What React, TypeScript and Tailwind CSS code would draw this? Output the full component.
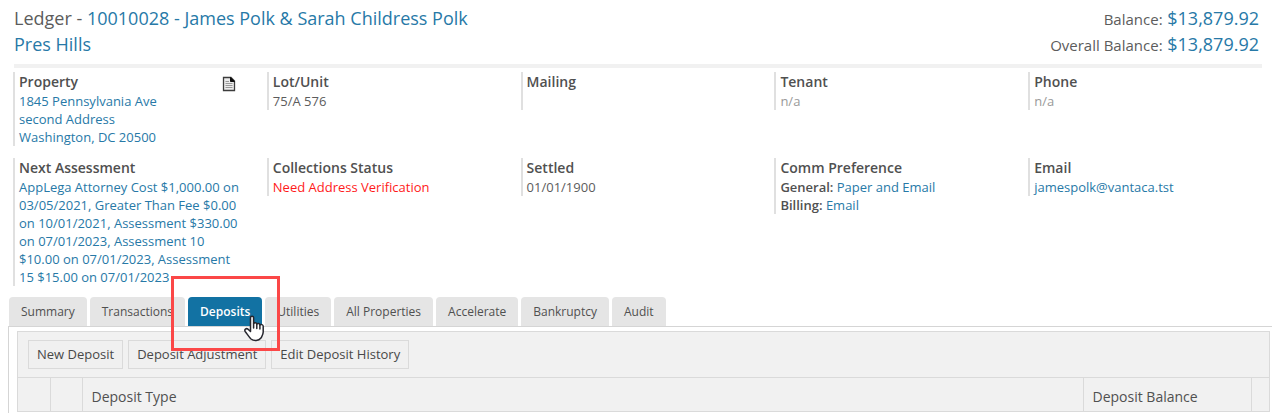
import type { ReactNode } from "react";

const tabs = [
  "Summary",
  "Transactions",
  "Deposits",
  "Utilities",
  "All Properties",
  "Accelerate",
  "Bankruptcy",
  "Audit",
];
const actions = ["New Deposit", "Deposit Adjustment", "Edit Deposit History"];

const NoteIcon = () => (
  <svg viewBox="0 0 14 16" className="h-4 w-[14px]" fill="none">
    <path d="M1.500 1.500h7.500l3.500 3.500v9.500h-11z" fill="#ececec" stroke="#3c3c3c" strokeWidth="1.300" />
    <path d="M8.500 1.500v4h4z" fill="#111" stroke="#111" />
    <path d="M3.500 5.500h3.500M3.500 7.500h7M3.500 9.500h7M3.500 11.500h7" stroke="#999" />
  </svg>
);

const HandCursor = () => (
  <svg
    viewBox="0 0 20 27"
    className="absolute top-[18px] left-[56px] h-[27px] w-5"
    fill="#fff"
    stroke="#26262e"
    strokeWidth="1.500"
    strokeLinejoin="round"
    strokeLinecap="round"
  >
    <path d="M6.500 15V2.600C6.500 .8 9.600 .8 9.600 2.600V8.600C10.200 7.200 12.800 7.400 12.800 9.200C13.600 8 15.900 8.200 15.900 10C17 9 19.200 9.500 19.200 11.300V17C19.200 19.500 18 21 17 23C14.500 26.200 9.800 26.200 7 24C5 22 3.500 19.500 1.200 16.500C0 14.500 2.200 13 3.800 14L6.500 16.500Z" />
    <path d="M9.600 8.600v4.500M12.800 9.200V13.500M15.900 10V14" />
  </svg>
);

const Field = ({
  title,
  icon,
  children,
}: {
  title: string;
  icon?: ReactNode;
  children?: ReactNode;
}) => (
  <section className="relative self-start border-l-2 border-[#e0e0e0] pr-1 pl-1 text-[13px] leading-[18px]">
    <h2 className="text-sm leading-5 font-semibold text-[#505050]">{title}</h2>
    {icon}
    {children}
  </section>
);

const Link = ({ children }: { children: ReactNode }) => (
  <a href="#" className="text-[#2779a7]">
    {children}
  </a>
);

const App = () => (
  <main className="overflow-hidden bg-white font-['Open_Sans',sans-serif] text-[#5c5c5c]">
    <header className="mr-[10px] ml-[14px] flex justify-between border-b-4 border-[#f1f1f1] pt-[5px] pb-[7px] text-lg leading-[26px]">
      <h1>
        Ledger -{" "}
        <Link>
          10010028 - James Polk &amp; Sarah Childress Polk
          <br />
          Pres Hills
        </Link>
      </h1>
      <div className="mr-[3px] text-right">
        <p>
          <span className="text-[15px] leading-none">Balance:</span>{" "}
          <Link>$13,879.92</Link>
        </p>
        <p>
          <span className="text-[15px] leading-none">Overall Balance:</span>{" "}
          <Link>$13,879.92</Link>
        </p>
      </div>
    </header>

    <div className="mt-1 mr-[10px] ml-[13px] grid grid-cols-5 gap-x-5 gap-y-3">
      <Field
        title="Property"
        icon={
          <button aria-label="Notes" className="absolute top-1 right-[11px]">
            <NoteIcon />
          </button>
        }
      >
        <Link>
          1845 Pennsylvania Ave
          <br />
          second Address
          <br />
          Washington, DC 20500
        </Link>
      </Field>
      <Field title="Lot/Unit">75/A 576</Field>
      <Field title="Mailing">
        <br />
      </Field>
      <Field title="Tenant">
        <p className="text-[#999]">n/a</p>
      </Field>
      <Field title="Phone">
        <p className="text-[#999]">n/a</p>
      </Field>
      <Field title="Next Assessment">
        <Link>
          AppLega Attorney Cost $1,000.00 on 03/05/2021, Greater Than Fee $0.00
          on 10/01/2021, Assessment $330.00 on 07/01/2023, Assessment 10 $10.00
          on 07/01/2023, Assessment 15 $15.00 on 07/01/2023
        </Link>
      </Field>
      <Field title="Collections Status">
        <p className="text-[#ff1a1a]">Need Address Verification</p>
      </Field>
      <Field title="Settled">01/01/1900</Field>
      <Field title="Comm Preference">
        <p>
          <b className="font-semibold text-[#505050]">General:</b>{" "}
          <Link>Paper and Email</Link>
        </p>
        <p>
          <b className="font-semibold text-[#505050]">Billing:</b>{" "}
          <Link>Email</Link>
        </p>
      </Field>
      <Field title="Email">
        <Link>jamespolk@vantaca.tst</Link>
      </Field>
    </div>

    <nav className="mt-[11px] ml-[9px] flex gap-[3px] text-xs">
      {tabs.map((tab) =>
        tab === "Deposits" ? (
          <div key={tab} className="relative">
            <button className="h-[29px] rounded-t bg-[#1272a3] px-3 font-semibold text-white">
              {tab}
            </button>
            <div className="pointer-events-none absolute -top-[21px] -left-[17px] z-10 h-[75px] w-[109px] border-3 border-[#fb4747]" />
            <HandCursor />
          </div>
        ) : (
          <button
            key={tab}
            className="h-[29px] rounded-t bg-[#e5e5e5] px-3 text-[#505050]"
          >
            {tab}
          </button>
        ),
      )}
    </nav>

    <div className="ml-2 border-t border-l border-[#d5d5d5] pt-1 pr-[2px] pb-[2px] pl-2">
      <div className="border border-b-0 border-[#dadada] bg-[#f1f1f1]">
        <div className="flex gap-[5px] px-[10px] py-2">
          {actions.map((action) => (
            <button
              key={action}
              className="h-[29px] border border-[#dadada] bg-[#f0f0f0] px-2 text-[13px] text-[#484848]"
            >
              {action}
            </button>
          ))}
        </div>
        <table className="w-full table-fixed border-y border-[#dadada] text-left text-sm text-[#505050]">
          <thead>
            <tr className="h-[34px] divide-x divide-[#dadada]">
              <th className="w-8" aria-label="Expand" />
              <th className="w-8" aria-label="Edit" />
              <th className="px-[9px] pt-1 font-normal">Deposit Type</th>
              <th className="w-[168px] px-[9px] pt-1 font-normal">
                Deposit Balance
              </th>
              <th className="w-[18px]" aria-label="Scroll" />
            </tr>
          </thead>
        </table>
      </div>
    </div>
  </main>
);

export default App;
